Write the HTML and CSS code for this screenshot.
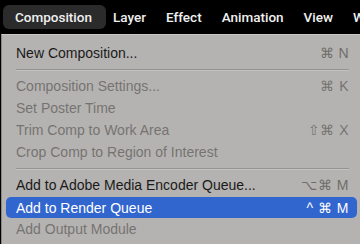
FILE: index.html
```html
<!DOCTYPE html>
<html lang="en">
<head>
    <meta charset="UTF-8">
    <meta name="viewport" content="width=device-width, initial-scale=1.0">
    <title>Composition Menu</title>
    <link rel="stylesheet" href="styles.css">
</head>
<body>
    <div class="menubar">
        <span class="menubar-item active">Composition</span>
        <span class="menubar-item">Layer</span>
        <span class="menubar-item">Effect</span>
        <span class="menubar-item">Animation</span>
        <span class="menubar-item">View</span>
        <span class="menubar-item">Window</span>
    </div>

    <div class="menu">
        <div class="menu-row"><span>New Composition...</span><span class="shortcut">⌘ N</span></div>
        <div class="separator"></div>
        <div class="menu-row disabled"><span>Composition Settings...</span><span class="shortcut">⌘ K</span></div>
        <div class="menu-row disabled"><span>Set Poster Time</span></div>
        <div class="menu-row disabled"><span>Trim Comp to Work Area</span><span class="shortcut">⇧⌘ X</span></div>
        <div class="menu-row disabled"><span>Crop Comp to Region of Interest</span></div>
        <div class="separator"></div>
        <div class="menu-row"><span>Add to Adobe Media Encoder Queue...</span><span class="shortcut">⌥⌘ M</span></div>
        <div class="menu-row selected"><span>Add to Render Queue</span><span class="shortcut">^ ⌘ M</span></div>
        <div class="menu-row disabled"><span>Add Output Module</span></div>
    </div>
</body>
</html>
```

FILE: styles.css
```css
body { margin: 0; width: 360px; height: 244px; overflow: hidden; background: #000; font-family: "Liberation Sans", Arial, sans-serif; }
.menubar { display: flex; height: 34px; align-items: center; padding-left: 3px; white-space: nowrap; overflow: hidden; }
.menubar-item { flex-shrink: 0; color: #f0f0f0; font-family: Roboto, "Liberation Sans", sans-serif; font-size: 13.5px; font-weight: 500; padding: 4px 10px; border-radius: 6px; line-height: 16px; }
.menubar-item.active { background: #2b2b2b; padding: 4px 14px 4px 12px; margin-right: -3px; }
.menu { margin-left: 1px; width: 370px; height: 210px; background: #b5b3b1; border-left: 1px solid #8a8886; border-top: 1px solid #c9c7c5; padding: 7px 0 0 4px; box-sizing: border-box; }
.menu-row { display: flex; justify-content: space-between; height: 22px; align-items: center; padding: 0 0 0 10px; width: 351px; box-sizing: border-box; font-size: 14px; color: #1a1a1a; border-radius: 5px; }
.menu-row .shortcut { color: #6f6d6b; padding-right: 8px; letter-spacing: 0.5px; }
.menu-row.disabled { color: #757371; }
.menu-row.disabled .shortcut { color: #757371; }
.menu-row.selected { background: #3266cf; color: #fff; height: 21px; margin: 1px 0 0; }
.menu-row.selected .shortcut { color: #fff; }
.separator { height: 1px; background: #969492; margin: 5px 0 4px 10px; width: 333px; border-bottom: 1px solid #c4c2c0; }
```
